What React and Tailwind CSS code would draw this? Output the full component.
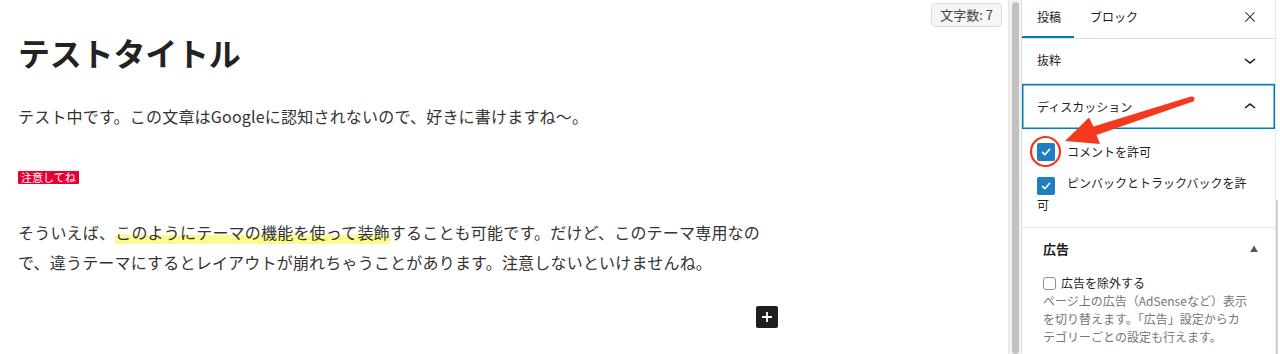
import React from 'react';

const font = "font-['Noto_Sans_CJK_JP','Noto_Sans',sans-serif]";

const ChevronDown = () => (
    <svg width="24" height="24" viewBox="0 0 24 24" className="fill-[#1e1e1e]">
        <path d="M17.5 11.6L12 16l-5.5-4.4.9-1.2L12 14l4.5-3.6 1 1.2z" />
    </svg>
);

const ChevronUp = () => (
    <svg width="24" height="24" viewBox="0 0 24 24" className="fill-[#1e1e1e]">
        <path d="M6.5 12.4L12 8l5.5 4.4-.9 1.2L12 10l-4.5 3.6-1-1.2z" />
    </svg>
);

const CheckBox = ({ className = '' }) => (
    <span className={`inline-flex items-center justify-center w-[18px] h-[18px] rounded-[2px] bg-[#1f7ec0] ${className}`}>
        <svg width="12" height="12" viewBox="0 0 12 12" fill="none">
            <path d="M2.6 6.4l2.3 2.3L9.6 3.3" stroke="white" strokeWidth="1.6" strokeLinecap="round" strokeLinejoin="round" />
        </svg>
    </span>
);

// red annotation arrow + circle drawn over the screenshot
const Annotation = () => (
    <svg className="absolute inset-0 pointer-events-none" width="1280" height="354" viewBox="0 0 1280 354">
        <circle cx="1045.5" cy="151.5" r="14.5" fill="none" stroke="#f0361c" strokeWidth="2.2" />
        <polygon
            fill="#f4391e"
            points="1065,141 1100,144 1096.5,135 1193,101.5 1191,96.5 1093.5,126.5 1089,117.5"
        />
        <circle cx="1192" cy="99" r="2.5" fill="#f4391e" />
    </svg>
);

const Editor = () => (
    <div className="relative flex-1 min-w-0 pl-[18px] pt-[30px] text-[#333]">
        {/* floating word counter */}
        <div className="absolute top-[3px] right-[6px] h-[24px] px-[8px] flex items-center rounded-[4px] border border-[#dcdcdc] bg-[#f6f6f6] text-[13px] text-[#444]">
            文字数: 7
        </div>

        <h1 className="text-[32px] leading-[44px] font-bold text-[#222] tracking-[-0.2px]">テストタイトル</h1>

        <p className="mt-[27px] text-[16px] leading-[30px] tracking-[0.2px]">
            テスト中です。この文章はGoogleに認知されないので、好きに書けますね〜。
        </p>

        <div className="mt-[38px] leading-[13px] h-[13px]">
            <span className="inline-block bg-[#e60033] text-white text-[11px] leading-[13px] px-[3px] rounded-[1px]">注意してね</span>
        </div>

        <p className="mt-[35px] w-[760px] text-[16px] leading-[30px] tracking-[0.2px]">
            そういえば、<span className="bg-[linear-gradient(transparent_62%,#fdf98c_62%)]">このようにテーマの機能を使って装飾</span>することも可能です。だけど、このテーマ専用なので、違うテーマにするとレイアウトが崩れちゃうことがあります。注意しないといけませんね。
        </p>

        <div className="mt-[29px] ml-[738px] w-[22px] h-[22px] rounded-[2px] bg-[#1e1e1e] flex items-center justify-center">
            <svg width="14" height="14" viewBox="0 0 14 14">
                <path d="M7 2v10M2 7h10" stroke="white" strokeWidth="1.8" />
            </svg>
        </div>
    </div>
);

const Sidebar = () => (
    <div className="w-[259px] flex shrink-0">
        <div className="flex-1 border-l border-[#e0e0e0] text-[12px] text-[#1e1e1e]">
            {/* tabs */}
            <div className="h-[39px] border-b border-[#e0e0e0] flex items-stretch">
                <div className="relative w-[52px] pl-[15px] pb-[4px] flex items-center">
                    投稿
                    <span className="absolute left-0 right-0 bottom-0 h-[2px] bg-[#007cba]" />
                </div>
                <div className="pl-[16px] pb-[4px] flex items-center">ブロック</div>
                <div className="ml-auto pr-[17px] pb-[4px] flex items-center">
                    <svg width="16" height="16" viewBox="0 0 24 24" className="fill-[#1e1e1e]">
                        <path d="M13 11.8l6.1-6.3-1-1-6.1 6.2-6.1-6.2-1 1 6.1 6.3-6.5 6.7 1 1 6.5-6.6 6.5 6.6 1-1z" />
                    </svg>
                </div>
            </div>

            <div className="h-[45px] border-b border-[#e0e0e0] flex items-center justify-between pl-[15px] pr-[13px] pb-[3px]">
                <span>抜粋</span>
                <ChevronDown />
            </div>

            <div className="border-b border-[#e0e0e0]">
                <div className="h-[45px] flex items-center justify-between pl-[15px] pr-[13px] shadow-[inset_0_0_0_1.5px_#007cba]">
                    <span>ディスカッション</span>
                    <ChevronUp />
                </div>
                <div className="pl-[15px] pr-[23px] pt-[14px] pb-[12px]">
                    <div className="flex items-center">
                        <CheckBox />
                        <span className="ml-[12px]">コメントを許可</span>
                    </div>
                    <div className="mt-[12px] leading-[20px]">
                        <CheckBox className="align-[-4px] mr-[12px]" />
                        ピンバックとトラックバックを許可
                    </div>
                </div>
            </div>

            {/* ad metabox */}
            <div className="pl-[21px] pr-[25px] pt-[11px]">
                <div className="flex items-center justify-between leading-[20px]">
                    <span className="text-[13px] font-bold">広告</span>
                    <span className="text-[8px] text-[#555] mr-[-8px]">▲</span>
                </div>
                <div className="mt-[15px] flex items-center leading-[18px]">
                    <span className="w-[13px] h-[13px] rounded-[3px] border border-[#8c8f94] bg-white" />
                    <span className="ml-[5px] text-[#1e1e1e]">広告を除外する</span>
                </div>
                <p className="text-[#757575] leading-[18px]">
                    ページ上の広告（AdSenseなど）表示を切り替えます。「広告」設定からカテゴリーごとの設定も行えます。
                </p>
            </div>
        </div>
        <div className="w-[5px] border-l border-[#e8e8e8] flex flex-col">
            <div className="h-[200px]" />
            <div className="w-[2px] flex-1 bg-[#d0d0d0]" />
        </div>
    </div>
);

export default function App() {
    return (
        <div className={`relative flex h-[354px] w-[1280px] overflow-hidden bg-white ${font}`}>
            <Editor />
            {/* editor scrollbar */}
            <div className="w-[13px] shrink-0 bg-[#f3f3f3] border-l border-[#e6e6e6] flex justify-center pt-[2px]">
                <div className="w-[7px] h-full rounded-full bg-[#c1c1c1]" />
            </div>
            <Sidebar />
            <Annotation />
        </div>
    );
}
